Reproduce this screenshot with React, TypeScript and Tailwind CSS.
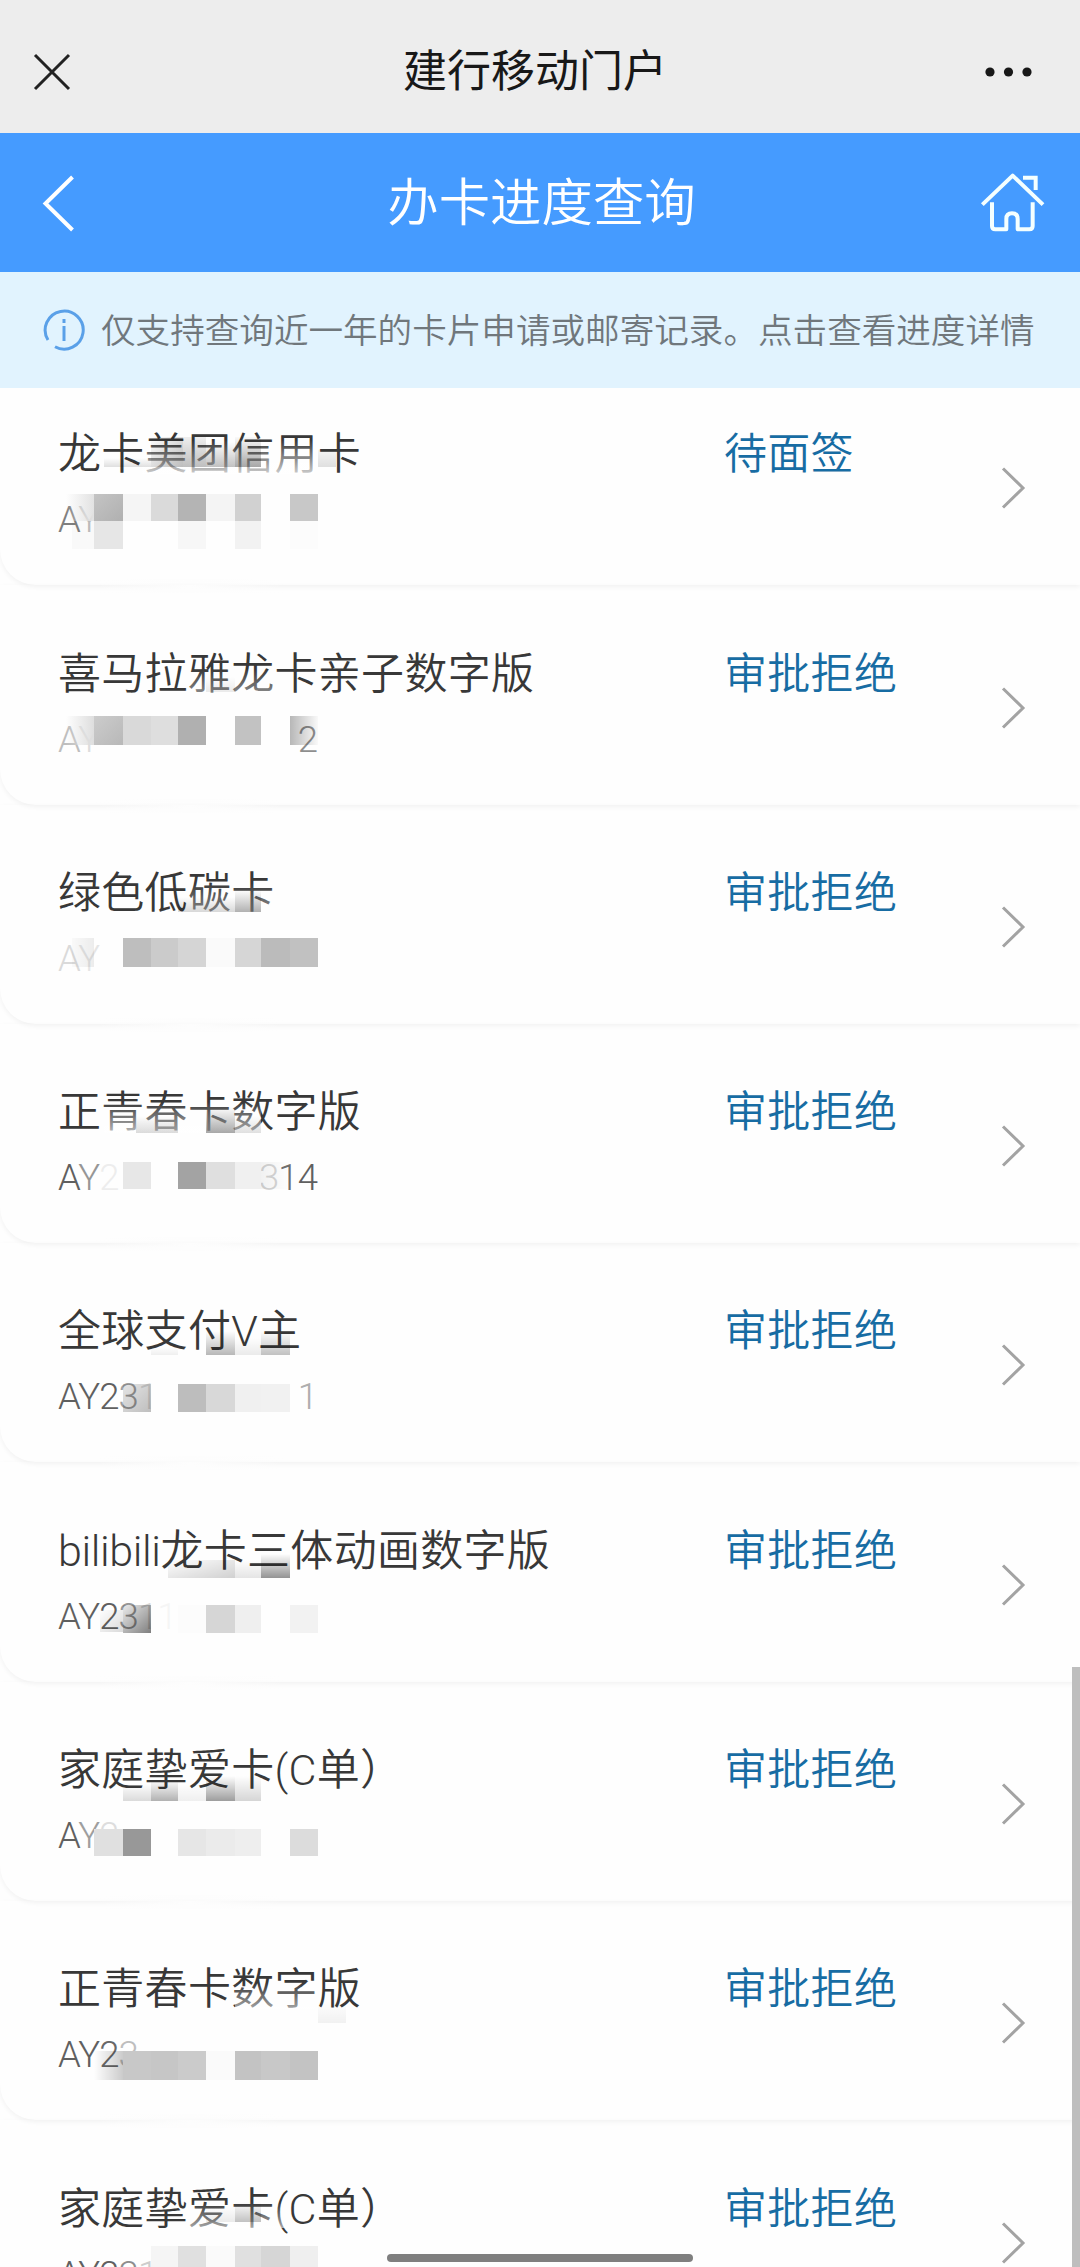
type Glyph = [text: string, opacity: number];

/** One tile of the privacy mask: left, top, width, height, start colour, end colour, gradient direction. */
type Tile = [x: number, y: number, w: number, h: number, from: string, to?: string, dir?: string];

interface Application {
  latin?: string;
  title: string;
  status: string;
  head: Glyph[];
  tail: Glyph[];
  tiles: Tile[];
}

const CLEAR = 'rgba(255,255,255,0)';
const VEIL = 'rgba(255,255,255,0.65)';
const SHADE = 'rgba(0,0,0,0)';

const shade = (alpha: number) => `rgba(0,0,0,${alpha})`;

const applications: Application[] = [
  {
    title: '龙卡美团信用卡',
    status: '待面签',
    head: [['A', 0.8], ['Y', 0.4]],
    tail: [],
    tiles: [
      [142, 74, 172, 34, CLEAR, 'rgba(255,255,255,0.75)'],
      [104, 92, 47, 9, SHADE, shade(0.12)],
      [151, 71, 32, 30, SHADE, shade(0.26), 'to bottom right'],
      [183, 71, 23, 30, shade(0.06), shade(0.25)],
      [206, 76, 29, 25, SHADE, shade(0.24)],
      [235, 71, 26, 30, shade(0.02), shade(0.34)],
      [318, 84, 18, 17, shade(0.04), shade(0.12)],
      [66, 128, 28, 27, CLEAR, '#e2e2e2', 'to right'],
      [94, 128, 29, 27, '#c4c4c4', '#b0b0b0', 'to bottom right'],
      [123, 128, 28, 27, '#f5f5f5'],
      [151, 128, 27, 27, '#dadada'],
      [178, 128, 28, 27, '#b4b4b4'],
      [206, 128, 29, 27, '#f4f4f4'],
      [235, 128, 26, 27, '#d1d1d1'],
      [290, 128, 28, 27, '#c8c8c8'],
      [72, 155, 22, 28, 'rgba(0,0,0,0.02)'],
      [94, 155, 29, 28, '#e6e6e6'],
      [178, 155, 28, 28, '#f7f7f7'],
      [235, 155, 26, 28, '#f2f2f2'],
      [290, 155, 28, 28, '#fcfcfc'],
    ],
  },
  {
    title: '喜马拉雅龙卡亲子数字版',
    status: '审批拒绝',
    head: [['A', 0.4], ['Y', 0.2]],
    tail: [['2', 0.7]],
    tiles: [
      [190, 84, 84, 24, CLEAR, 'rgba(255,255,255,0.4)'],
      [206, 92, 29, 15, SHADE, shade(0.08)],
      [66, 131, 28, 29, CLEAR, '#dedede', 'to right'],
      [94, 131, 29, 29, '#cccccc', '#b8b8b8', 'to bottom right'],
      [123, 131, 28, 29, '#d9d9d9'],
      [151, 131, 27, 29, '#dedede'],
      [178, 131, 28, 29, '#b0b0b0'],
      [235, 131, 26, 29, '#c2c2c2'],
      [290, 131, 28, 29, 'rgba(0,0,0,0.28)', 'rgba(0,0,0,0.02)', 'to right'],
    ],
  },
  {
    title: '绿色低碳卡',
    status: '审批拒绝',
    head: [['A', 0.22], ['Y', 0.15]],
    tail: [],
    tiles: [
      [189, 78, 84, 30, CLEAR, 'rgba(255,255,255,0.45)'],
      [178, 92, 57, 15, SHADE, shade(0.15)],
      [235, 85, 26, 22, SHADE, shade(0.3)],
      [72, 133, 22, 29, 'rgba(0,0,0,0.02)', 'rgba(0,0,0,0.07)', 'to right'],
      [123, 133, 28, 29, '#bebebe'],
      [151, 133, 27, 29, '#cbcbcb'],
      [178, 133, 28, 29, '#d5d5d5'],
      [206, 133, 29, 29, '#fafafa'],
      [235, 133, 26, 29, '#d6d6d6'],
      [261, 133, 29, 29, '#bbbbbb'],
      [290, 133, 28, 29, '#c1c1c1'],
    ],
  },
  {
    title: '正青春卡数字版',
    status: '审批拒绝',
    head: [['A', 1], ['Y', 0.65], ['2', 0.1]],
    tail: [['3', 0.25], ['1', 0.9], ['4', 1]],
    tiles: [
      [104, 78, 157, 31, CLEAR, VEIL],
      [136, 92, 42, 17, SHADE, shade(0.14)],
      [206, 83, 29, 26, SHADE, shade(0.34)],
      [235, 92, 26, 17, SHADE, shade(0.12)],
      [123, 138, 28, 27, '#e7e7e7'],
      [178, 138, 28, 27, '#a3a3a3'],
      [206, 138, 29, 27, '#dfdfdf'],
      [235, 138, 26, 27, '#f0f0f0'],
      [261, 138, 29, 27, 'rgba(0,0,0,0.05)', SHADE, 'to right'],
    ],
  },
  {
    title: '全球支付V主',
    status: '审批拒绝',
    head: [['A', 1], ['Y', 1], ['2', 1], ['3', 0.6], ['1', 0.2]],
    tail: [['1', 0.5]],
    tiles: [
      [151, 104, 27, 8, SHADE, shade(0.06)],
      [206, 88, 29, 24, SHADE, shade(0.28)],
      [235, 95, 26, 17, SHADE, shade(0.08)],
      [261, 88, 29, 24, SHADE, shade(0.24)],
      [123, 141, 28, 28, 'rgba(0,0,0,0.1)', 'rgba(0,0,0,0.25)', 'to bottom right'],
      [178, 141, 28, 28, '#bdbdbd'],
      [206, 141, 29, 28, '#d8d8d8'],
      [235, 141, 26, 28, '#f0f0f0'],
      [261, 141, 29, 28, '#f1f1f1'],
    ],
  },
  {
    latin: 'bilibili',
    title: '龙卡三体动画数字版',
    status: '审批拒绝',
    head: [['A', 1], ['Y', 1], ['2', 1], ['3', 0.65], ['1', 0.25], ['1', 0.05]],
    tail: [],
    tiles: [
      [168, 98, 67, 18, SHADE, shade(0.18), 'to bottom right'],
      [235, 98, 26, 18, SHADE, shade(0.1)],
      [261, 92, 29, 24, SHADE, shade(0.42)],
      [100, 148, 23, 22, SHADE, shade(0.14), 'to bottom right'],
      [123, 143, 28, 28, 'rgba(0,0,0,0.08)', 'rgba(0,0,0,0.5)', 'to bottom right'],
      [178, 143, 28, 28, '#fcfcfc'],
      [206, 143, 29, 28, '#d6d6d6'],
      [235, 143, 26, 28, '#efefef'],
      [290, 143, 28, 28, '#f2f2f2'],
    ],
  },
  {
    title: '家庭挚爱卡(C单）',
    status: '审批拒绝',
    head: [['A', 1], ['Y', 0.6], ['2', 0.2]],
    tail: [],
    tiles: [
      [123, 102, 28, 17, SHADE, shade(0.14)],
      [151, 98, 27, 21, SHADE, shade(0.3)],
      [178, 102, 28, 17, SHADE, shade(0.06)],
      [206, 94, 29, 25, SHADE, shade(0.38)],
      [235, 94, 26, 25, SHADE, shade(0.16)],
      [94, 147, 29, 27, '#e0e0e0'],
      [123, 147, 28, 27, '#989898'],
      [178, 147, 28, 27, '#e6e6e6'],
      [206, 147, 29, 27, '#ebebeb'],
      [235, 147, 26, 27, '#eeeeee'],
      [290, 147, 28, 27, '#dcdcdc'],
    ],
  },
  {
    title: '正青春卡数字版',
    status: '审批拒绝',
    head: [['A', 1], ['Y', 1], ['2', 0.95], ['3', 0.4]],
    tail: [],
    tiles: [
      [235, 82, 80, 26, CLEAR, 'rgba(255,255,255,0.55)'],
      [318, 100, 28, 22, SHADE, shade(0.05)],
      [94, 150, 29, 29, SHADE, shade(0.2), 'to right'],
      [123, 150, 28, 29, '#c8c8c8'],
      [151, 150, 27, 29, '#c6c6c6'],
      [178, 150, 28, 29, '#cbcbcb'],
      [206, 150, 29, 29, '#fafafa'],
      [235, 150, 26, 29, '#c3c3c3'],
      [261, 150, 29, 29, '#c8c8c8'],
      [290, 150, 28, 29, '#c3c3c3'],
    ],
  },
  {
    title: '家庭挚爱卡(C单）',
    status: '审批拒绝',
    head: [['A', 1], ['Y', 1], ['2', 1], ['3', 0.7], ['1', 0.3]],
    tail: [],
    tiles: [
      [189, 82, 100, 26, CLEAR, 'rgba(255,255,255,0.55)'],
      [206, 86, 29, 16, SHADE, shade(0.08)],
      [235, 82, 26, 20, SHADE, shade(0.24)],
      [151, 126, 27, 28, '#f5f5f5'],
      [178, 126, 28, 28, '#e0e0e0'],
      [206, 126, 29, 28, '#fafafa'],
      [235, 126, 26, 28, '#e0e0e0'],
      [261, 126, 29, 28, '#d6d6d6'],
      [290, 126, 28, 28, '#efefef'],
    ],
  },
];

function MaskTile({ tile }: { tile: Tile }) {
  const [x, y, w, h, from, to = from, dir = 'to bottom'] = tile;
  return (
    <span
      className="absolute"
      style={{ left: x, top: y, width: w, height: h, backgroundImage: `linear-gradient(${dir}, ${from}, ${to})` }}
    />
  );
}

function CodeText({ glyphs }: { glyphs: Glyph[] }) {
  return (
    <span>
      {glyphs.map(([text, opacity], i) => (
        <span key={i} style={{ opacity }}>
          {text}
        </span>
      ))}
    </span>
  );
}

function ApplicationRow({ item, first }: { item: Application; first: boolean }) {
  return (
    <li
      className={`relative flex shrink-0 flex-col justify-end rounded-bl-[36px] shadow-[0_2px_5px_rgba(0,0,0,0.05)] ${
        first ? 'h-[197.3px]' : 'h-[219.3px]'
      }`}
    >
      <div className="flex h-[155px] items-start pl-[58px] font-[Roboto,'Noto_Sans_CJK_SC',sans-serif]">
        <div className="w-[666px]">
          <div className="h-[48px] text-[43px] leading-[48px] font-[350] tracking-[0.3px] whitespace-nowrap text-[#383838]">
            {item.latin && <span className="tracking-[-0.4px]">{item.latin}</span>}
            {item.title}
          </div>
          <div className="mt-[18px] flex h-[48px] w-[259px] justify-between text-[36.5px] leading-[48px] tracking-[-0.9px] text-[#606060]">
            <CodeText glyphs={item.head} />
            <CodeText glyphs={item.tail} />
          </div>
        </div>
        <div className="h-[48px] w-[276px] text-[43px] leading-[48px] font-[350] tracking-[0.3px] whitespace-nowrap text-[#176ca3]">
          {item.status}
        </div>
        <svg className="mt-[36px] h-[44px] w-[28px]" viewBox="0 0 28 44" fill="none" stroke="#a3a3a3" strokeWidth="3">
          <path d="M3 2.5 L23 22 L3 41.5" />
        </svg>
      </div>
      <div className="pointer-events-none absolute bottom-0 left-0 h-[219.3px] w-[360px]" aria-hidden="true">
        {item.tiles.map((tile, i) => (
          <MaskTile key={i} tile={tile} />
        ))}
        <span className="absolute -bottom-[8px] left-[95px] h-[14px] w-[190px] bg-linear-to-r from-transparent via-[#fdfdfd] to-transparent" />
      </div>
    </li>
  );
}

export default function App() {
  return (
    <div className="relative flex h-[2267px] w-[1080px] flex-col overflow-hidden bg-[#fefefe] font-['Noto_Sans_CJK_SC',sans-serif] font-light">
      <header className="flex h-[133px] shrink-0 items-center justify-between bg-[#ededed] pt-[10px] pr-[46px] pl-[32px]">
        <svg className="h-[40px] w-[40px]" viewBox="0 0 40 40" fill="none" stroke="#222" strokeWidth="3">
          <path d="M3 3 L37 37 M37 3 L3 37" />
        </svg>
        <h1 className="mr-[-14px] mb-[8px] text-[44px] leading-[60px] font-normal text-[#181818]">建行移动门户</h1>
        <svg className="h-[12px] w-[50px]" viewBox="0 0 50 12" fill="#181818">
          <circle cx="6" cy="6" r="4.6" />
          <circle cx="24.5" cy="6" r="4.6" />
          <circle cx="43" cy="6" r="4.6" />
        </svg>
      </header>

      <nav className="flex h-[139px] shrink-0 items-center justify-between bg-[#459bff] pr-[35px] pl-[40px]">
        <svg className="h-[60px] w-[66px]" viewBox="0 0 66 60" fill="none" stroke="#fff" strokeWidth="4">
          <path d="M32.5 4 L5.5 30.5 L32.5 57" />
        </svg>
        <h2 className="mr-[3px] mb-[7px] text-[51.4px] leading-[70px] font-[350] text-white">办卡进度查询</h2>
        <svg
          className="h-[64px] w-[65px]"
          viewBox="120 120 195 192"
          fill="none"
          stroke="#f4ffff"
          strokeWidth="12"
          strokeLinejoin="round"
        >
          <path d="M127 221 L218 134 L309 221" />
          <path d="M249 140 H287 V177" strokeLinejoin="miter" />
          <path d="M156 214 V285 Q156 295 166 295 H199 V264 Q199 247 216 247 Q233 247 233 264 V295 H268 Q278 295 278 285 V214" />
        </svg>
      </nav>

      <div className="flex h-[116px] shrink-0 items-center bg-[#e1f3fe] pl-[42px]">
        <svg className="mb-[1px] h-[44px] w-[44px]" viewBox="0 0 44 44" fill="none" stroke="#5aa0e8" strokeWidth="3">
          <path d="M6 32 A19 19 0 1 1 13 38.7" />
          <path d="M22 18 V33" />
          <path d="M22 11 V15" />
        </svg>
        <p className="mb-[5px] ml-[15px] text-[34.6px] leading-[48px] font-[350] whitespace-nowrap text-[#70777c]">
          仅支持查询近一年的卡片申请或邮寄记录。点击查看进度详情
        </p>
      </div>

      <ul className="flex min-h-0 flex-1 flex-col overflow-hidden">
        {applications.map((item, i) => (
          <ApplicationRow key={i} item={item} first={i === 0} />
        ))}
      </ul>

      <div className="absolute right-0 bottom-0 h-[600px] w-[8px] bg-[#bebebe]" />
      <div className="absolute bottom-[5px] left-[387px] h-[8px] w-[306px] rounded-full bg-[#7f7f7f]" />
    </div>
  );
}
